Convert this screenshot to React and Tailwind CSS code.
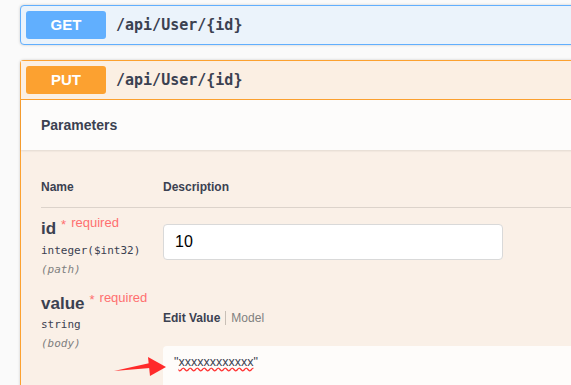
export default function App() {
  const mono = { fontFamily: '"DejaVu Sans Mono", "Liberation Mono", monospace' };
  return (
    <div className="h-[385px] w-full overflow-hidden bg-[#fafafa] pl-[20px] pt-[5px] text-[#3b4151]" style={{ fontFamily: '"Liberation Sans", Arial, sans-serif' }}>
      <div className="flex h-[40px] w-[600px] items-center rounded-[4px] border border-[#61affe] bg-[#ebf3fb] px-[5px] shadow-[0_0_3px_rgba(0,0,0,0.19)]">
        <div className="flex h-[28px] w-[80px] items-center justify-center rounded-[3px] bg-[#61affe] text-[15px] font-bold text-white">GET</div>
        <div className="ml-[10px] text-[15px] font-bold text-[#3b4151]" style={mono}>/api/User/&#123;id&#125;</div>
      </div>

      <div className="mt-[15px] w-[600px] rounded-t-[4px] border border-b-0 border-[#fca130] bg-[#faf0e7] shadow-[0_0_3px_rgba(0,0,0,0.19)]">
        <div className="flex h-[39px] items-center border-b border-[#fca130] bg-[#fbefe3] px-[5px]">
          <div className="flex h-[28px] w-[80px] items-center justify-center rounded-[3px] bg-[#fca130] text-[15px] font-bold text-white">PUT</div>
          <div className="ml-[10px] text-[15px] font-bold text-[#3b4151]" style={mono}>/api/User/&#123;id&#125;</div>
        </div>

        <div className="flex h-[50px] items-center bg-[#fdfcfb] pl-[20px] text-[14px] font-bold shadow-[0_1px_2px_rgba(0,0,0,0.1)]">Parameters</div>

        <div className="pl-[20px]">
          <div className="mt-[28px] flex h-[30px] items-start border-b border-[#dcd3cb] text-[12px] font-bold">
            <div className="w-[122px]">Name</div>
            <div>Description</div>
          </div>

          <div className="mt-[10px] flex">
            <div className="w-[122px]">
              <div className="flex items-start">
                <span className="text-[17px] font-bold leading-[22px]">id</span>
                <span className="ml-[5px] text-[13px] leading-[14px] text-[#ff6f6f]">*</span>
                <span className="ml-[5px] -mt-[3px] text-[13px] leading-[16px] text-[#ff6f6f]">required</span>
              </div>
              <div className="mt-[2px] text-[11px] leading-[18px]" style={mono}>integer($int32)</div>
              <div className="text-[11px] italic leading-[20px] text-[#808080]" style={mono}>(path)</div>
            </div>
            <div className="pt-[6px]">
              <div className="flex h-[36px] w-[340px] items-center rounded-[4px] border border-[#d9d9d9] bg-white pl-[11px] text-[16px] text-black">10</div>
            </div>
          </div>

          <div className="mt-[13px] flex">
            <div className="w-[122px]">
              <div className="flex items-start">
                <span className="text-[17px] font-bold leading-[22px]">value</span>
                <span className="ml-[5px] text-[13px] leading-[14px] text-[#ff6f6f]">*</span>
                <span className="ml-[5px] -mt-[3px] text-[13px] leading-[16px] text-[#ff6f6f]">required</span>
              </div>
              <div className="mt-[1px] text-[11px] leading-[18px]" style={mono}>string</div>
              <div className="text-[11px] italic leading-[20px] text-[#808080]" style={mono}>(body)</div>
            </div>
            <div className="flex-1">
              <div className="mt-[16px] flex items-center text-[12px]">
                <span className="font-bold">Edit Value</span>
                <span className="mx-[5px] h-[14px] w-px bg-[#c8bfb6]" />
                <span className="text-[#808080]">Model</span>
              </div>
              <div className="relative mt-[19px] h-[60px] rounded-[4px] bg-[#fefcfa] pl-[11px] pt-[7px] text-[12.5px]">
                <span>"</span>
                <span className="underline decoration-[#ff3030] decoration-wavy">xxxxxxxxxxxx</span>
                <span>"</span>
              </div>
            </div>
          </div>
        </div>
      </div>

      <svg className="absolute left-[110px] top-[355px]" width="60" height="25" viewBox="0 0 60 25">
        <polygon points="4,16 40,8 40,13" fill="#ff2a2a" />
        <polygon points="38,2 56,12 40,21" fill="#ff2a2a" />
      </svg>
    </div>
  );
}
